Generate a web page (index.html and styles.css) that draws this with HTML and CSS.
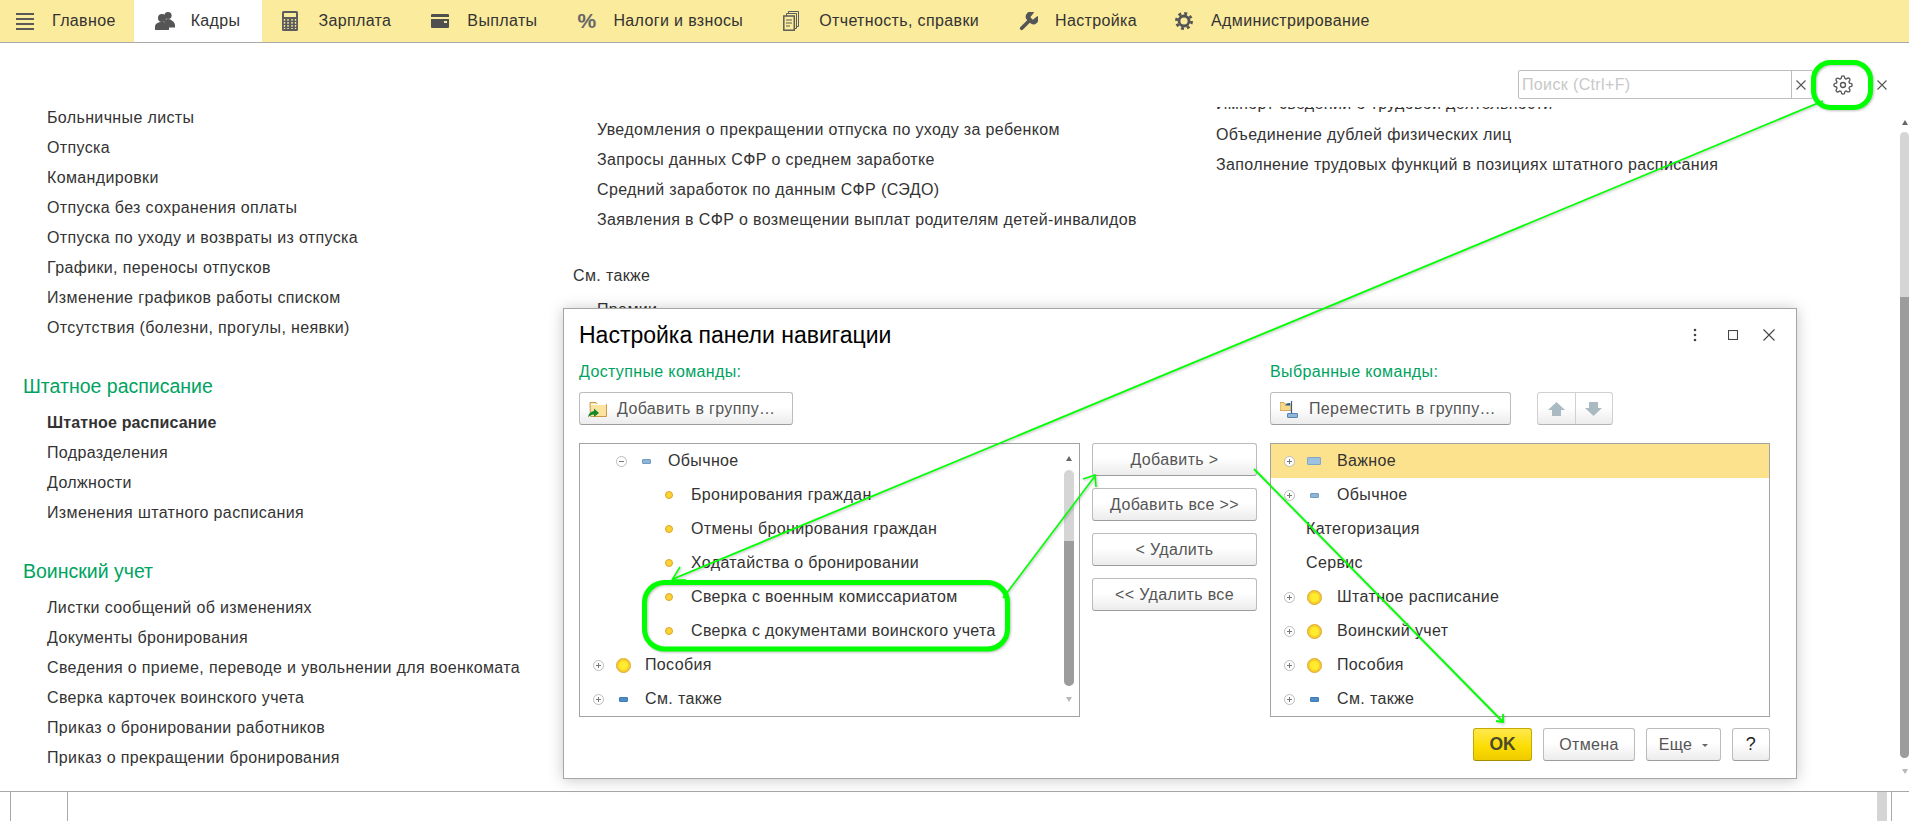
FILE: index.html
```html
<!DOCTYPE html>
<html lang="ru">
<head>
<meta charset="utf-8">
<title>Кадры</title>
<link rel="stylesheet" href="styles.css">
</head>
<body>
<div class="page">
  <nav class="topbar">
    <div class="tab first"><span class="tab-icon"><svg width="18" height="18" viewBox="0 0 18 18"><path d="M0 2h18M0 7h18M0 12h18M0 17h18" stroke="#585858" stroke-width="2"/></svg></span>Главное</div>
    <div class="tab active"><span class="tab-icon"><svg width="20" height="20" viewBox="0 0 20 20" fill="#555"><circle cx="13" cy="4.5" r="3.6"/><path d="M9 11c0-2 2-3 4-3s3 .8 4.500 2c1.500 1 2.500 2.500 2.500 4.500v2h-6l-1-3z"/><circle cx="7" cy="7" r="4"/><path d="M0 19v-3.500c0-2.500 3-4.500 7-4.500s7 2 7 4.500V19z"/></svg></span>Кадры</div>
    <div class="tab"><span class="tab-icon"><svg width="16" height="20" viewBox="0 0 16 20"><rect width="16" height="20" rx="1.500" fill="#5c5c5c"/><rect x="2" y="2" width="12" height="4" fill="#fbeb9d"/><path d="M2.500 8v10M6 8v10M10 8v10M13.500 8v10" stroke="#fbeb9d" stroke-width="1.400" stroke-dasharray="1.800 1.200"/></svg></span>Зарплата</div>
    <div class="tab"><span class="tab-icon"><svg width="18" height="14" viewBox="0 0 18 14"><path d="M1 0h16a1 1 0 0 1 1 1v2H0V1a1 1 0 0 1 1-1zM0 5h18v8a1 1 0 0 1-1 1H1a1 1 0 0 1-1-1z" fill="#4f4f4f"/><rect x="13" y="7" width="3" height="2" fill="#fbeb9d"/></svg></span>Выплаты</div>
    <div class="tab"><span class="tab-icon percent">%</span>Налоги и взносы</div>
    <div class="tab"><span class="tab-icon"><svg width="16" height="20" viewBox="0 0 16 20" fill="none" stroke="#5c5c5c"><path d="M5.500 3V.5h10v15H13" stroke-width="1"/><path d="M3.500 5V2.500h10v15H11" stroke-width="1"/><rect x=".8" y="5" width="10.500" height="14.200" stroke-width="1.500"/><path d="M3 9h6M3 12h6M3 15h4" stroke-width="1.200"/></svg></span>Отчетность, справки</div>
    <div class="tab"><span class="tab-icon"><svg width="19" height="19" viewBox="1 1 22 22" fill="#555"><path d="M14.700 6.300a1 1 0 0 0 0 1.400l1.600 1.600a1 1 0 0 0 1.400 0l4.770-3.770a6 6 0 0 1-8.940 7.940l-7.910 7.910a2.120 2.120 0 0 1-3-3l7.910-7.910a6 6 0 0 1 7.940-8.940l-3.760 4.760z"/></svg></span>Настройка</div>
    <div class="tab last"><span class="tab-icon"><svg width="18" height="18" viewBox="0 0 18 18" fill="none" stroke="#555"><circle cx="9" cy="9" r="5" stroke-width="2.800"/><circle cx="9" cy="9" r="7.600" stroke-width="2.800" stroke-dasharray="2.950 3.020"/></svg></span>Администрирование</div>
  </nav>

  <div class="workarea">
    <main class="main">
      <div class="toolbar">
        <div class="search">
          <span class="search-text">Поиск (Ctrl+F)</span>
          <span class="search-clear"><svg width="10" height="10" viewBox="0 0 10 10"><path d="M.5.500l9 9M9.500.500l-9 9" stroke="#555" stroke-width="1.100"/></svg></span>
        </div>
        <button class="gear-btn"><svg width="20" height="20" viewBox="0 0 24 24" fill="none" stroke="#555" stroke-width="1.600"><path d="M12 15a3 3 0 1 0 0-6 3 3 0 0 0 0 6z"/><path d="M19.400 15a1.650 1.650 0 0 0 .33 1.820l.06.06a2 2 0 0 1 0 2.830 2 2 0 0 1-2.830 0l-.06-.06a1.650 1.650 0 0 0-1.820-.33 1.650 1.650 0 0 0-1 1.510V21a2 2 0 0 1-2 2 2 2 0 0 1-2-2v-.09A1.650 1.650 0 0 0 9 19.400a1.650 1.650 0 0 0-1.820.33l-.06.06a2 2 0 0 1-2.830 0 2 2 0 0 1 0-2.830l.06-.06a1.650 1.650 0 0 0 .33-1.820 1.650 1.650 0 0 0-1.510-1H3a2 2 0 0 1-2-2 2 2 0 0 1 2-2h.09A1.650 1.650 0 0 0 4.600 9a1.650 1.650 0 0 0-.33-1.820l-.06-.06a2 2 0 0 1 0-2.830 2 2 0 0 1 2.830 0l.06.06a1.650 1.650 0 0 0 1.820.33H9a1.650 1.650 0 0 0 1-1.510V3a2 2 0 0 1 2-2 2 2 0 0 1 2 2v.09a1.650 1.650 0 0 0 1 1.510 1.650 1.650 0 0 0 1.820-.33l.06-.06a2 2 0 0 1 2.830 0 2 2 0 0 1 0 2.830l-.06.06a1.650 1.650 0 0 0-.33 1.820V9a1.650 1.650 0 0 0 1.510 1H21a2 2 0 0 1 2 2 2 2 0 0 1-2 2h-.09a1.650 1.650 0 0 0-1.510 1z"/></svg></button>
        <span class="close-x"><svg width="10" height="10" viewBox="0 0 10 10"><path d="M.5.500l9 9M9.500.500l-9 9" stroke="#555" stroke-width="1.100"/></svg></span>
      </div>
      <div class="columns">
        <section class="col col-a">
          <div class="item">Больничные листы</div>
          <div class="item">Отпуска</div>
          <div class="item">Командировки</div>
          <div class="item">Отпуска без сохранения оплаты</div>
          <div class="item">Отпуска по уходу и возвраты из отпуска</div>
          <div class="item">Графики, переносы отпусков</div>
          <div class="item">Изменение графиков работы списком</div>
          <div class="item">Отсутствия (болезни, прогулы, неявки)</div>
          <h2 class="section-head">Штатное расписание</h2>
          <div class="item strong">Штатное расписание</div>
          <div class="item">Подразделения</div>
          <div class="item">Должности</div>
          <div class="item">Изменения штатного расписания</div>
          <h2 class="section-head">Воинский учет</h2>
          <div class="item">Листки сообщений об изменениях</div>
          <div class="item">Документы бронирования</div>
          <div class="item">Сведения о приеме, переводе и увольнении для военкомата</div>
          <div class="item">Сверка карточек воинского учета</div>
          <div class="item">Приказ о бронировании работников</div>
          <div class="item">Приказ о прекращении бронирования</div>
        </section>
        <section class="col col-b">
          <div class="item">Уведомления о прекращении отпуска по уходу за ребенком</div>
          <div class="item">Запросы данных СФР о среднем заработке</div>
          <div class="item">Средний заработок по данным СФР (СЭДО)</div>
          <div class="item">Заявления в СФР о возмещении выплат родителям детей-инвалидов</div>
          <div class="plain-head">См. также</div>
          <div class="item after-head">Премии</div>
        </section>
        <section class="col col-c">
          <div class="item clipped">Импорт сведений о трудовой деятельности</div>
          <div class="item">Объединение дублей физических лиц</div>
          <div class="item">Заполнение трудовых функций в позициях штатного расписания</div>
        </section>
      </div>
    </main>
    <aside class="vscroll">
      <span class="arrow-up"></span>
      <div class="vtrack"><div class="vthumb"></div></div>
      <span class="arrow-down faint"></span>
    </aside>
  </div>

  <footer class="statusbar">
    <span class="cell-a"></span>
    <span class="cell-b"></span>
    <span class="cell-grey"></span>
    <span class="cell-c"></span>
  </footer>

  <div class="dialog">
    <header class="dialog-head">
      <span class="dialog-title">Настройка панели навигации</span>
      <span class="dialog-ctrls">
        <svg width="4" height="14" viewBox="0 0 4 14" fill="#444"><circle cx="2" cy="2" r="1.300"/><circle cx="2" cy="7" r="1.300"/><circle cx="2" cy="12" r="1.300"/></svg>
        <svg class="ctrl-box" width="10" height="10" viewBox="0 0 10 10" fill="none" stroke="#444"><rect x=".5" y=".5" width="9" height="9" stroke-width="1.100"/></svg>
        <svg width="12" height="12" viewBox="0 0 12 12"><path d="M.5.500l11 11M11.500.500l-11 11" stroke="#444" stroke-width="1.100"/></svg>
      </span>
    </header>
    <div class="dialog-grid">
      <div class="pane">
        <div class="pane-label">Доступные команды:</div>
        <div class="pane-tools">
          <button class="btn btn-group-l"><svg class="btn-ico" width="20" height="20" viewBox="0 0 20 20"><path d="M2 3.500h6l1.500 2H18.500v12h-16z" fill="#fde3a0" stroke="#c99a4a"/><path d="M3 5.500h15" stroke="#fff"/><path d="M0 18.500c.5-4 2.500-6 6-6.500V9.500l5 4.500-5 4v-2.500c-2.500 0-4.500 1-6 3z" fill="#12882c"/></svg>Добавить в группу…</button>
        </div>
        <div class="tree tree-left">
          <div class="row lv2"><span class="exp minus"></span><span class="slot"><i class="bar"></i></span>Обычное</div>
          <div class="row leaf"><span class="slot"><i class="dot"></i></span>Бронирования граждан</div>
          <div class="row leaf"><span class="slot"><i class="dot"></i></span>Отмены бронирования граждан</div>
          <div class="row leaf"><span class="slot"><i class="dot"></i></span>Ходатайства о бронировании</div>
          <div class="row leaf"><span class="slot"><i class="dot"></i></span>Сверка с военным комиссариатом</div>
          <div class="row leaf"><span class="slot"><i class="dot"></i></span>Сверка с документами воинского учета</div>
          <div class="row lv1"><span class="exp plus"></span><span class="slot"><i class="coin"></i></span>Пособия</div>
          <div class="row lv1"><span class="exp plus"></span><span class="slot"><i class="bar deep"></i></span>См. также</div>
          <div class="tree-scroll">
            <span class="arrow-up"></span>
            <div class="ttrack"><div class="tthumb"></div></div>
            <span class="arrow-down faint"></span>
          </div>
        </div>
      </div>
      <div class="middle">
        <button class="btn">Добавить &gt;</button>
        <button class="btn">Добавить все &gt;&gt;</button>
        <button class="btn">&lt; Удалить</button>
        <button class="btn">&lt;&lt; Удалить все</button>
      </div>
      <div class="pane">
        <div class="pane-label">Выбранные команды:</div>
        <div class="pane-tools">
          <button class="btn btn-group-r"><svg class="btn-ico" width="18" height="18" viewBox="0 0 18 18"><path d="M0 2.500h4l1 1.500h6v6.500H0z" fill="#f7d98a" stroke="#c99a4a" stroke-width=".8"/><path d="M11.500 1v13" stroke="#35608c" stroke-width="1.200" fill="none"/><path d="M5 5.500h5V3l-3 .5z" fill="#2c5a88"/><rect x="7.500" y="13.500" width="10" height="4" rx=".5" fill="#8db8dc" stroke="#3d6e9e" stroke-width=".8"/></svg>Переместить в группу…</button>
          <div class="updown">
            <span class="ud"><svg width="17" height="14" viewBox="0 0 17 14" fill="#a9bac3"><path d="M8.500 0L17 8h-4v6H4V8H0z"/></svg></span>
            <span class="ud"><svg width="17" height="14" viewBox="0 0 17 14" fill="#a9bac3"><path d="M8.500 14L17 6h-4V0H4v6H0z"/></svg></span>
          </div>
        </div>
        <div class="tree">
          <div class="row lv1 selected"><span class="exp plus"></span><span class="slot"><i class="bar wide"></i></span>Важное</div>
          <div class="row lv1"><span class="exp plus"></span><span class="slot"><i class="bar"></i></span>Обычное</div>
          <div class="row bare">Категоризация</div>
          <div class="row bare">Сервис</div>
          <div class="row lv1"><span class="exp plus"></span><span class="slot"><i class="coin"></i></span>Штатное расписание</div>
          <div class="row lv1"><span class="exp plus"></span><span class="slot"><i class="coin"></i></span>Воинский учет</div>
          <div class="row lv1"><span class="exp plus"></span><span class="slot"><i class="coin"></i></span>Пособия</div>
          <div class="row lv1"><span class="exp plus"></span><span class="slot"><i class="bar deep"></i></span>См. также</div>
        </div>
      </div>
    </div>
    <footer class="dialog-foot">
      <button class="btn btn-ok">OK</button>
      <button class="btn btn-cancel">Отмена</button>
      <button class="btn btn-more">Еще<i class="caret"></i></button>
      <button class="btn btn-help">?</button>
    </footer>
  </div>

  <svg class="annot" width="1909" height="821" viewBox="0 0 1909 821" fill="none" stroke="#00ff00">
    <rect x="1813.500" y="62.500" width="57" height="45" rx="17" stroke-width="5"/>
    <rect x="644.500" y="582.500" width="363" height="66.500" rx="20" stroke-width="5"/>
    <path d="M1823 101L673 579" stroke-width="1.800"/>
    <path d="M680 567L672 580L686 580" stroke-width="1.500"/>
    <path d="M1003 598L1095 476" stroke-width="1.600"/>
    <path d="M1083 479L1095 475L1096 487" stroke-width="1.600"/>
    <path d="M1254 469L1503 722" stroke-width="1.800"/>
    <path d="M1496 721L1503 722L1503 714" stroke-width="1.800"/>
  </svg>
</div>
</body>
</html>
```

FILE: styles.css
```css
* { box-sizing: border-box; }
html, body { margin: 0; padding: 0; background: #fff; }
body { font-family: "Liberation Sans", Arial, sans-serif; font-size: 16px; letter-spacing: .36px; color: #333; }
.page { position: relative; width: 1909px; height: 821px; overflow: hidden; display: flex; flex-direction: column; }

/* top navigation */
.topbar { flex: none; height: 43px; display: flex; background: #fbeb9d; border-bottom: 1px solid #a8a8a8; }
.tab { display: flex; align-items: center; padding: 0 20px; white-space: nowrap; color: #333; }
.tab.first { padding-left: 16px; padding-right: 18px; }
.tab.active { background: #fff; padding-left: 21px; padding-right: 22px; }
.tab.last { padding-left: 18px; }
.tab-icon { display: flex; align-items: center; width: 36px; height: 22px; }
.percent { font-size: 21px; font-weight: 700; color: #666; letter-spacing: 0; }

/* working area */
.workarea { flex: 1; min-height: 0; display: flex; }
.main { flex: 1; min-width: 0; display: flex; flex-direction: column; }
.toolbar { flex: none; height: 64px; padding: 27px 13px 8px 0; display: flex; justify-content: flex-end; align-items: center; }
.search { width: 295px; height: 29px; display: flex; border: 1px solid #bdbdbd; border-radius: 2px; }
.search-text { flex: 1; padding-left: 3px; line-height: 27px; color: #c8c8c8; }
.search-clear { flex: none; width: 21px; padding-right: 3px; display: flex; align-items: center; justify-content: center; border-left: 1px solid #bdbdbd; }
.gear-btn { width: 42px; height: 29px; margin-left: 9px; padding: 0; border: 0; background: none; display: flex; align-items: center; justify-content: center; }
.close-x { margin-left: 13px; width: 10px; height: 10px; display: flex; }

.columns { flex: 1; min-height: 0; overflow: hidden; display: grid; grid-template-columns: 550px 642px 1fr; align-items: start; }
.col-a { margin-top: -4px; padding-left: 23px; }
.col-b { padding: 8px 0 0 23px; }
.col-c { margin-top: -18px; padding-left: 24px; }
.item { height: 30px; line-height: 30px; white-space: nowrap; }
.item.clipped { margin-bottom: 1px; }
.col-a .item { padding-left: 24px; }
.col-b .item { padding-left: 24px; }
.item.strong { font-weight: 700; letter-spacing: .15px; }
.section-head { margin: 28px 0 7px; height: 30px; line-height: 30px; font-size: 19.5px; font-weight: 400; letter-spacing: 0; color: #00a35f; }
.plain-head { margin-top: 26px; height: 30px; line-height: 30px; }
.after-head { margin-top: 4px; }

/* outer scrollbar */
.vscroll { flex: none; width: 9px; position: relative; display: flex; flex-direction: column; align-items: center; padding-top: 77px; }
.vtrack { width: 9px; height: 626px; margin-top: 7px; background: #d5d5d5; border-radius: 5px; }
.vthumb { width: 9px; height: 461px; margin-top: 165px; background: #9c9c9c; border-radius: 0 0 5px 5px; }
.vscroll .arrow-down { margin-top: 11px; }
.arrow-up, .arrow-down { display: block; width: 0; height: 0; border-left: 3px solid transparent; border-right: 3px solid transparent; }
.arrow-up { border-bottom: 5px solid #666; }
.arrow-down { border-top: 5px solid #666; }
.arrow-down.faint { border-top-color: #b8b8b8; }

/* status bar */
.statusbar { flex: none; height: 30px; display: flex; border-top: 1px solid #a8a8a8; }
.cell-a { width: 11px; border-right: 1px solid #a8a8a8; }
.cell-b { width: 57px; border-right: 1px solid #a8a8a8; }
.cell-grey { width: 10px; margin-left: 1809px; background: #d5d5d5; }
.cell-c { width: 5px; border-right: 1px solid #a8a8a8; }

/* dialog */
.dialog { position: absolute; left: 563px; top: 308px; width: 1234px; height: 471px; background: #fff; border: 1px solid #a6a6a6; box-shadow: 0 1px 14px rgba(0,0,0,.22); padding: 0 25px 0 15px; display: flex; flex-direction: column; }
.dialog-head { flex: none; height: 52px; display: flex; align-items: center; justify-content: space-between; margin-right: -4px; }
.dialog-title { font-size: 23px; letter-spacing: 0; color: #000; }
.dialog-ctrls { display: flex; align-items: center; }
.ctrl-box { margin: 0 25px 0 31px; }
.dialog-grid { flex: none; display: grid; grid-template-columns: 501px 190px 500px; }
.pane-label { height: 22px; line-height: 22px; color: #00a35f; }
.pane-tools { height: 33px; margin: 9px 0 18px; display: flex; }
.btn { height: 33px; padding: 0; font: inherit; letter-spacing: inherit; color: #555; background: linear-gradient(#fff, #fff 45%, #ececec); border: 1px solid #bcbcbc; border-bottom-color: #9c9c9c; border-radius: 3px; display: flex; align-items: center; justify-content: center; white-space: nowrap; }
.btn-group-l { width: 214px; justify-content: flex-start; padding-left: 8px; }
.btn-group-r { width: 241px; justify-content: flex-start; padding-left: 9px; }
.btn-ico { flex: none; margin-right: 9px; }
.btn-group-r .btn-ico { margin-right: 11px; }
.updown { width: 76px; height: 33px; margin-left: 26px; display: flex; background: linear-gradient(#fff, #fff 45%, #ececec); border: 1px solid #d0d0d0; border-bottom-color: #b4b4b4; border-radius: 3px; }
.ud { flex: 1; display: flex; align-items: center; justify-content: center; }
.ud + .ud { border-left: 1px solid #d0d0d0; }

.tree { position: relative; height: 274px; border: 1px solid #a2a2a2; overflow: hidden; }
.row { height: 34px; display: flex; align-items: center; white-space: nowrap; color: #333; }
.lv1 { padding-left: 13px; }
.lv2 { padding-left: 36px; }
.leaf { padding-left: 81px; }
.bare { padding-left: 35px; }
.selected { background: #fde28e; }
.exp { flex: none; width: 11px; height: 11px; margin-right: 11px; border: 1px solid #bdbdbd; border-radius: 50%; background: #fff; }
.minus { background: linear-gradient(#777, #777) center / 5px 1px no-repeat, #fff; }
.plus { background: linear-gradient(#777, #777) center / 5px 1px no-repeat, linear-gradient(#777, #777) center / 1px 5px no-repeat, #fff; }
.slot { flex: none; width: 16px; margin-right: 15px; display: flex; align-items: center; justify-content: center; }
.tree-left .slot, .leaf .slot { margin-right: 14px; }
.bar { display: block; width: 9px; height: 5px; border-radius: 1px; background: #8fb5d6; border: 1px solid #6f9cc3; }
.bar.deep { background: #4e8cc8; border-color: #3f7cb6; }
.bar.wide { width: 14px; height: 8px; background: #9cc2e0; border-color: #7fa9cc; }
.dot { display: block; width: 8px; height: 8px; border-radius: 50%; background: #fdd235; border: 1px solid #d8a52a; }
.coin { display: block; width: 15px; height: 15px; border-radius: 50%; background: radial-gradient(circle, #ffec2e 0 4px, #f9cf2c 5px); border: 1px solid #d8a52a; }
.tree-scroll { position: absolute; right: 5px; top: 0; bottom: 0; width: 10px; display: flex; flex-direction: column; align-items: center; padding-top: 12px; }
.ttrack { width: 10px; height: 216px; margin-top: 9px; background: #d5d5d5; border-radius: 5px; }
.tthumb { width: 10px; height: 145px; margin-top: 71px; background: #9c9c9c; border-radius: 0 0 5px 5px; }
.tree-scroll .arrow-down { margin-top: 11px; }

.middle { padding: 82px 0 0 12px; display: flex; flex-direction: column; gap: 12px; }
.middle .btn { width: 165px; }

.dialog-foot { flex: none; height: 33px; margin: 11px 1px 0 0; display: flex; justify-content: flex-end; gap: 11px; }
.btn-ok { width: 59px; font-size: 17.5px; letter-spacing: 0; font-weight: 700; color: #4a4a2a; background: linear-gradient(#ffe94d, #fbdc00 60%, #eecb00); border-color: #c6a800; border-bottom-color: #a58d00; }
.btn-cancel { width: 92px; }
.btn-more { width: 75px; }
.btn-help { width: 38px; font-size: 18px; color: #222; }
.caret { width: 0; height: 0; margin: 2px 0 0 10px; border-left: 3px solid transparent; border-right: 3px solid transparent; border-top: 3px solid #666; }

/* annotations drawn on top of the screenshot */
.annot { position: absolute; left: 0; top: 0; pointer-events: none; filter: drop-shadow(1.500px 1.500px 1px rgba(0,0,0,.25)); }
```
